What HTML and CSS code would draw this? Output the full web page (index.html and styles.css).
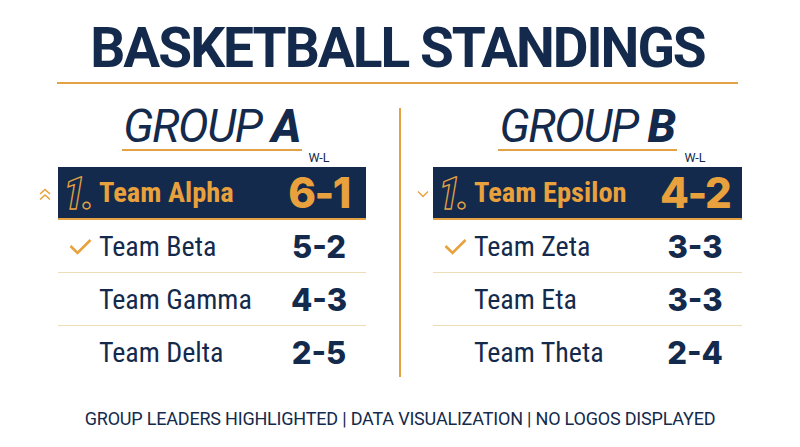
FILE: index.html
```html
<!DOCTYPE html>
<html>
<head>
<meta charset="utf-8">
<link rel="stylesheet" href="styles.css">
</head>
<body>
<div class="page">
  <header class="header">
    <h1 class="title">BASKETBALL STANDINGS</h1>
  </header>
  <main class="groups">
    <section class="group">
      <div class="group-head"><h2 class="group-title"><span class="gt-light">GROUP</span> <span class="gt-bold">A</span></h2></div>
      <div class="row row-label"><span></span><span></span><span class="wl">W-L</span></div>
      <div class="row row-leader">
        <span class="marker marker-out">
          <svg width="14" height="13" viewBox="0 0 14 13"><path d="M2 6 L7 1.5 L12 6 M2 11.5 L7 7 L12 11.5" fill="none" stroke="#e8a13c" stroke-width="1.6"/></svg>
        </span>
        <span class="rank">1.</span>
        <span class="name">Team Alpha</span>
        <span class="score score-lg">6-1</span>
      </div>
      <div class="row">
        <span class="mark"><svg width="23" height="17" viewBox="0 0 23 17"><path d="M1.5 8 L8.5 15 L21.5 2" fill="none" stroke="#e8a13c" stroke-width="2.6"/></svg></span>
        <span class="name">Team Beta</span>
        <span class="score">5-2</span>
      </div>
      <div class="row">
        <span class="mark"></span>
        <span class="name">Team Gamma</span>
        <span class="score">4-3</span>
      </div>
      <div class="row row-last">
        <span class="mark"></span>
        <span class="name">Team Delta</span>
        <span class="score">2-5</span>
      </div>
    </section>
    <div class="divider"></div>
    <section class="group">
      <div class="group-head"><h2 class="group-title"><span class="gt-light">GROUP</span> <span class="gt-bold">B</span></h2></div>
      <div class="row row-label"><span></span><span></span><span class="wl">W-L</span></div>
      <div class="row row-leader">
        <span class="marker marker-out marker-down">
          <svg width="12" height="8" viewBox="0 0 12 8"><path d="M1 1.5 L6 6.5 L11 1.5" fill="none" stroke="#e8a13c" stroke-width="1.4"/></svg>
        </span>
        <span class="rank">1.</span>
        <span class="name">Team Epsilon</span>
        <span class="score score-lg">4-2</span>
      </div>
      <div class="row">
        <span class="mark"><svg width="23" height="17" viewBox="0 0 23 17"><path d="M1.5 8 L8.5 15 L21.5 2" fill="none" stroke="#e8a13c" stroke-width="2.6"/></svg></span>
        <span class="name">Team Zeta</span>
        <span class="score">3-3</span>
      </div>
      <div class="row">
        <span class="mark"></span>
        <span class="name">Team Eta</span>
        <span class="score">3-3</span>
      </div>
      <div class="row row-last">
        <span class="mark"></span>
        <span class="name">Team Theta</span>
        <span class="score">2-4</span>
      </div>
    </section>
  </main>
  <footer class="footer">GROUP LEADERS HIGHLIGHTED | DATA VISUALIZATION | NO LOGOS DISPLAYED</footer>
</div>
</body>
</html>
```
FILE: styles.css
```css
* { box-sizing: border-box; }
html, body { margin: 0; padding: 0; background: #ffffff; }
body { width: 800px; height: 447px; overflow: hidden; font-family: Roboto, "Liberation Sans", sans-serif; color: #142a4c; }
.page { width: 800px; }

.header { margin: 0 62px 0 57px; padding-top: 21px; padding-bottom: 7px; border-bottom: 2px solid #e5a245; text-align: center; }
.title { margin: 0; font-size: 55px; line-height: 54px; font-weight: 700; font-stretch: 100%; letter-spacing: -2px; color: #142a4c; }

.groups { display: grid; grid-template-columns: 308px 67px 309px; margin-top: 20px; padding-left: 58px; }
.group { display: flex; flex-direction: column; min-width: 0; }
.group-head { display: flex; justify-content: center; }
.group-title { margin: 0; font-size: 46px; line-height: 45px; font-style: italic; font-weight: 400; font-stretch: 100%; letter-spacing: -1.5px; border-bottom: 2px solid #e5a245; padding: 0 2px 0 1px; color: #142a4c; }
.gt-light { font-weight: 400; }
.gt-bold { font-weight: 800; }

.divider { justify-self: center; width: 2px; background: #e5a245; margin: 4px 0 2px; }

.row { position: relative; display: grid; grid-template-columns: 41px minmax(0, 1fr) 70px; align-items: center; height: 53px; padding-right: 12px; border-bottom: 1.5px solid #efdcb9; }
.row-label { height: 16px; border-bottom: 0; align-items: start; }
.wl { font-size: 12.5px; line-height: 12px; text-align: center; font-weight: 400; font-stretch: 100%; color: #142a4c; padding-top: 1px; }
.row-leader { background: #142a4c; border-bottom: 2.5px solid #e5a245; }
.row-last { border-bottom: 0; }

.mark { display: flex; justify-content: center; padding-left: 4px; }
.marker-out { position: absolute; left: -20px; top: 21px; display: flex; }
.marker-down { left: -16px; top: 23px; }

.rank { font-size: 45px; font-weight: 700; font-style: italic; font-stretch: 75%; letter-spacing: -3px; color: transparent; -webkit-text-stroke: 1.3px #e5a245; padding-left: 5px; line-height: 1; margin-top: 2px; white-space: nowrap; }
.name { font-size: 28px; font-weight: 400; font-stretch: 75%; color: #142a4c; white-space: nowrap; }
.row-leader .name { font-weight: 700; font-size: 28.5px; color: #e8a13c; }
.score { font-family: Inter, Roboto, sans-serif; font-size: 31px; font-weight: 800; text-align: center; color: #142a4c; white-space: nowrap; }
.score-lg { font-size: 42px; letter-spacing: -1.5px; color: #e8a13c; }

.footer { margin-top: 31px; text-align: center; font-size: 18px; line-height: 18px; font-stretch: 100%; letter-spacing: -0.2px; color: #142a4c; }
```
